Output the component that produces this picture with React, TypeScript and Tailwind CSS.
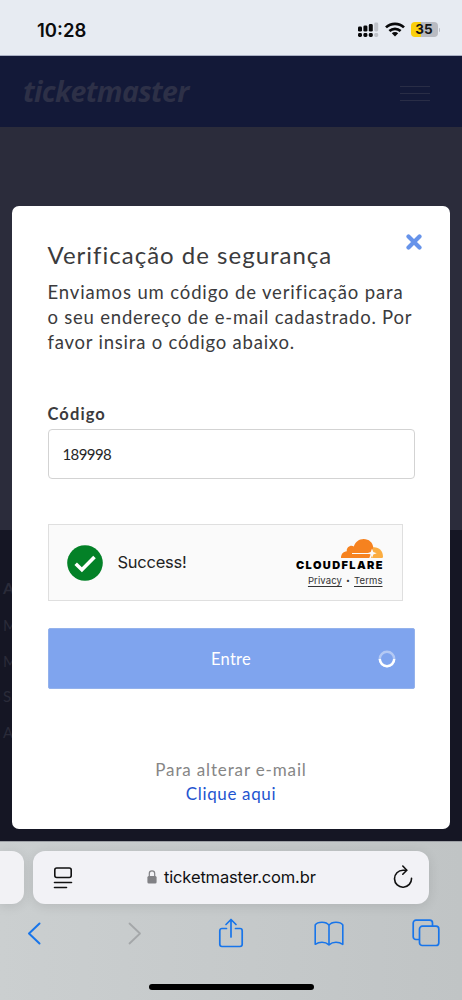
const footerLinks = ["M", "M", "S", "A"];

function StatusBar() {
  return (
    <div className="flex h-14 shrink-0 items-center justify-between border-b border-[#aab0c4] bg-[#e7ebf2] pl-[37px] pr-[22px] pt-1">
      <span className="font-['Inter',sans-serif] text-[18.5px] font-semibold leading-6 text-[#0b0b0d]">10:28</span>
      <div className="flex items-center">
        <svg width="21" height="15" viewBox="0 0 21 15" fill="#08080a" aria-hidden>
          <rect x="0" y="4.6" width="4" height="5" rx="1.4" />
          <rect x="5.4" y="3.4" width="4" height="6.2" rx="1.4" />
          <rect x="10.8" y="2" width="4" height="7.6" rx="1.4" />
          <rect x="16.2" y="0.5" width="4" height="9" rx="1.4" fill="#bfc2c9" />
          <rect x="0" y="11" width="4" height="4" rx="1.4" />
          <rect x="5.4" y="11" width="4" height="4" rx="1.4" />
          <rect x="10.8" y="11" width="4" height="4" rx="1.4" />
          <rect x="16.2" y="11" width="4" height="4" rx="1.4" fill="#bfc2c9" />
        </svg>
        <svg width="20" height="15" viewBox="0 0 20 15" className="ml-1.5" fill="none" stroke="#08080a" strokeWidth="2.7" aria-hidden>
          <path d="M1 5.4a13 13 0 0 1 18 0" />
          <path d="M4.4 9a8.3 8.3 0 0 1 11.2 0" />
          <path d="M10 14.4 6.8 11.2a4.6 4.6 0 0 1 6.4 0Z" fill="#08080a" stroke="none" />
        </svg>
        <div className="ml-1.5 flex h-[15px] w-[27px] items-center justify-center rounded-[4px] bg-linear-to-r from-[#facf0c] from-38% to-[#b9bbc2] to-38% font-['Inter',sans-serif] text-[13.5px] font-bold leading-none text-[#141414]">
          35
        </div>
        <div className="ml-px h-1 w-[1.5px] rounded-r bg-[#b9bbc2]" />
      </div>
    </div>
  );
}

function CloudflareMark() {
  return (
    <svg width="42" height="19" viewBox="0 0 42 19" aria-hidden>
      <path d="M30 19V9.4c1-.9 2-1.2 3.3-1.2C38 8.2 42 12 42 17.6c0 .9-.3 1.4-.8 1.4Z" fill="#fbad41" />
      <path d="M0 19c0-3.700 2.200-6.600 5.800-6.800C5.300 8.300 9.500 5.400 12.800 7.400 14.400 2.700 18.200 0 22.700 0c5.200 0 9.100 3.500 9.600 8.500L28.300 19Z" fill="#f6821f" />
      <path d="M11 14.500h17" stroke="#fafafa" strokeWidth="1" />
      <path d="m31 9.500 1.300 3.400 3.400 1.300-3.400 1.300L31 18.900l-1.300-3.400-3.400-1.300 3.400-1.300Z" fill="#fafafa" />
    </svg>
  );
}

function Turnstile() {
  return (
    <div className="mt-[45px] flex h-[77px] w-[355px] items-center border border-[#dfdfdf] bg-[#fafafa] pl-[18px] pr-[19px]">
      <svg width="36" height="36" viewBox="0 0 36 36" aria-hidden>
        <circle cx="18" cy="18" r="17.8" fill="#038127" />
        <path d="m8.700 18.700 6.200 6L27.500 12" fill="none" stroke="#fff" strokeWidth="3.6" />
      </svg>
      <span className="ml-[15px] font-['Inter',sans-serif] text-[16.5px] tracking-[-0.25px] text-[#232323]">Success!</span>
      <div className="ml-auto flex flex-col items-end">
        <CloudflareMark />
        <span className="-mr-[1.5px] mt-0.5 font-['Inter',sans-serif] text-[11px] font-black leading-[10px] tracking-[1.4px] text-black">CLOUDFLARE</span>
        <div className="mt-[5px] flex items-center gap-1 font-['Inter',sans-serif] text-[9.5px] leading-[12px] tracking-[0.1px] text-[#333]">
          <span className="underline underline-offset-2">Privacy</span>
          <span className="text-[7px]">•</span>
          <span className="underline underline-offset-2">Terms</span>
        </div>
      </div>
    </div>
  );
}

function VerificationDialog() {
  return (
    <div className="absolute left-3 top-[150px] flex h-[623px] w-[438px] flex-col rounded-[7px] bg-white px-[35.5px] pt-[33px] font-['Lato',sans-serif] text-[#3b3b3d]">
      <svg width="16" height="16" viewBox="0 0 16 16" className="absolute right-7 top-7" stroke="#6693ea" strokeWidth="4.2" strokeLinecap="round" aria-label="Fechar">
        <path d="m2.500 2.500 11 11M13.500 2.500l-11 11" />
      </svg>
      <h1 className="whitespace-nowrap text-[24px] leading-8 tracking-[1px]">Verificação de segurança</h1>
      <p className="mt-[9px] whitespace-nowrap text-[18.5px] leading-[25px] tracking-[0.78px]">
        <span className="tracking-[0.86px]">Enviamos um código de verificação para</span>
        <br />o seu endereço de e-mail cadastrado. Por
        <br />
        favor insira o código abaixo.
      </p>
      <label className="mt-[49px] text-[16.5px] font-bold leading-5 tracking-[1.1px]" htmlFor="codigo">Código</label>
      <input
        id="codigo"
        defaultValue="189998"
        className="mt-[5px] h-[50px] w-[367px] rounded-[4px] border border-[#d3d3d3] bg-white px-[14px] text-[15px] tracking-[-0.6px] text-[#262626] outline-none"
      />
      <Turnstile />
      <button className="relative mt-[27px] h-[61px] w-[367px] rounded-[2px] border border-[#94b2ec] bg-[#7fa4ee] pt-0.5 text-[16.5px] tracking-[0.3px] text-white">
        Entre
        <svg width="18" height="18" viewBox="0 0 18 18" className="absolute right-[18px] top-[21px]" fill="none" strokeWidth="2.4" aria-hidden>
          <circle cx="9" cy="9" r="7.2" stroke="#b4c9f4" />
          <path d="M1.800 9a7.200 7.200 0 0 0 14.400 0" stroke="#fff" />
        </svg>
      </button>
      <div className="mt-[69px] text-center text-[17px] leading-6">
        <p className="tracking-[0.85px] text-[#868686]">Para alterar e-mail</p>
        <p className="tracking-[0.65px] text-[#1f55d0]">Clique aqui</p>
      </div>
    </div>
  );
}

function Page() {
  return (
    <main className="relative flex h-[785px] shrink-0 flex-col overflow-hidden bg-[#2b2c3b] font-['Lato',sans-serif]">
      <header className="flex h-[71px] items-center justify-between bg-[#131938] pl-[23px] pr-8">
        <span className="font-['Open_Sans',sans-serif] text-[28.5px] font-bold italic leading-none tracking-[-0.65px] text-[#2d3047]">ticketmaster</span>
        <div className="mt-[3px] flex w-[30px] flex-col gap-[6px]">
          <div className="h-px bg-[#292d46]" />
          <div className="h-px bg-[#292d46]" />
          <div className="h-px bg-[#292d46]" />
        </div>
      </header>
      <footer className="mt-[403px] flex-1 bg-[#151624] pl-[3px] pt-[46px] text-[#2a2b39]">
        <p className="text-[16px] font-bold leading-6">A</p>
        <ul className="mt-[8px] text-[15px] leading-[35.6px]">
          {footerLinks.map((t, i) => (
            <li key={i}>{t}</li>
          ))}
        </ul>
      </footer>
      <VerificationDialog />
    </main>
  );
}

function BrowserBar() {
  return (
    <div className="flex h-[159px] shrink-0 flex-col border-t border-[#9da0a5] bg-linear-to-r from-[#cbcfd0] to-[#c0c4c5] pt-[9px]">
      <div className="flex gap-[9px]">
        <div className="h-[53px] w-6 rounded-r-[12px] bg-[#f2f2f5] shadow-[0_2px_12px_rgba(0,0,0,0.1)]" />
        <div className="flex h-[53px] w-[396px] items-center rounded-[12px] bg-[#f2f2f6] pl-5 pr-4 shadow-[0_2px_12px_rgba(0,0,0,0.1)]">
          <svg width="20" height="22" viewBox="0 0 20 22" fill="none" stroke="#111" strokeWidth="1.6" strokeLinecap="round" aria-hidden>
            <rect x="1.8" y="1" width="16.4" height="9.5" rx="2" />
            <path d="M1.500 15.500h17M1.500 20.500h12" />
          </svg>
          <div className="mb-[2px] ml-[74px] flex items-center gap-[7px]">
            <svg width="10" height="14" viewBox="0 0 10 14" aria-hidden>
              <path d="M2.300 7V3.600a2.700 2.700 0 0 1 5.400 0V7" fill="none" stroke="#818185" strokeWidth="1.2" />
              <rect x="0.4" y="6" width="9.2" height="7.5" rx="1.5" fill="#818185" />
            </svg>
            <span className="font-['Inter',sans-serif] text-[16.5px] leading-6 tracking-[-0.15px] text-[#101012]">ticketmaster.com.br</span>
          </div>
          <svg width="20" height="23" viewBox="0 0 20 23" className="mb-[3px] ml-auto" fill="none" stroke="#111" strokeWidth="1.6" strokeLinecap="round" strokeLinejoin="round" aria-hidden>
            <path d="M13.500 5.200H10a8.500 8.500 0 1 0 8.500 8" />
            <path d="m9.800 1 4 4.200-4 4" />
          </svg>
        </div>
      </div>
      <div className="mt-[12px] flex h-[34px] items-center pl-[27px]">
        <svg width="14" height="23" viewBox="0 0 14 23" fill="none" stroke="#1875ea" strokeWidth="2" strokeLinecap="round" strokeLinejoin="round" aria-hidden>
          <path d="M12.500 1.500 2 11.500l10.500 10" />
        </svg>
        <svg width="14" height="23" viewBox="0 0 14 23" fill="none" stroke="#a4a7a9" strokeWidth="1.8" strokeLinecap="round" strokeLinejoin="round" className="ml-[87px]" aria-hidden>
          <path d="m1.500 1.500 10.500 10-10.500 10" />
        </svg>
        <svg width="26" height="31" viewBox="0 0 26 31" fill="none" stroke="#1875ea" strokeWidth="1.7" strokeLinecap="round" strokeLinejoin="round" className="ml-[76px]" aria-hidden>
          <path d="M8.500 10.500H4A2.200 2.200 0 0 0 1.800 12.700v13.600A2.200 2.200 0 0 0 4 28.500h18a2.200 2.200 0 0 0 2.200-2.200V12.700a2.200 2.200 0 0 0-2.200-2.200h-4.500" />
          <path d="M13 19V2M8 6.500l5-5 5 5" />
        </svg>
        <svg width="30" height="25" viewBox="0 0 30 25" fill="none" stroke="#1875ea" strokeWidth="1.6" strokeLinejoin="round" className="ml-[70px]" aria-hidden>
          <path d="M15 4.200C13.500 2 11 1.200 8 1.200c-3 0-5.500.8-6.800 2.800v19.300c2-1.300 4.300-2 6.800-2 2.800 0 5 .8 7 2.500 2-1.700 4.200-2.500 7-2.500 2.500 0 4.800.7 6.800 2V4c-1.300-2-3.800-2.800-6.800-2.800-3 0-5.500.8-7 3ZM15 4.200v19.600" />
        </svg>
        <svg width="28" height="28" viewBox="0 0 28 28" fill="none" stroke="#1875ea" strokeWidth="1.7" className="ml-[68px]" aria-hidden>
          <path d="M7.500 20.500H4A2.800 2.800 0 0 1 1.200 17.700V4A2.800 2.800 0 0 1 4 1.200h13.700A2.800 2.800 0 0 1 20.500 4v3" />
          <rect x="7.5" y="7.2" width="19.3" height="19.3" rx="2.8" />
        </svg>
      </div>
      <div className="mx-auto mt-[34px] h-1.5 w-[165px] rounded-full bg-black" />
    </div>
  );
}

export default function App() {
  return (
    <div className="flex h-[1000px] w-[462px] flex-col overflow-hidden">
      <StatusBar />
      <Page />
      <BrowserBar />
    </div>
  );
}
